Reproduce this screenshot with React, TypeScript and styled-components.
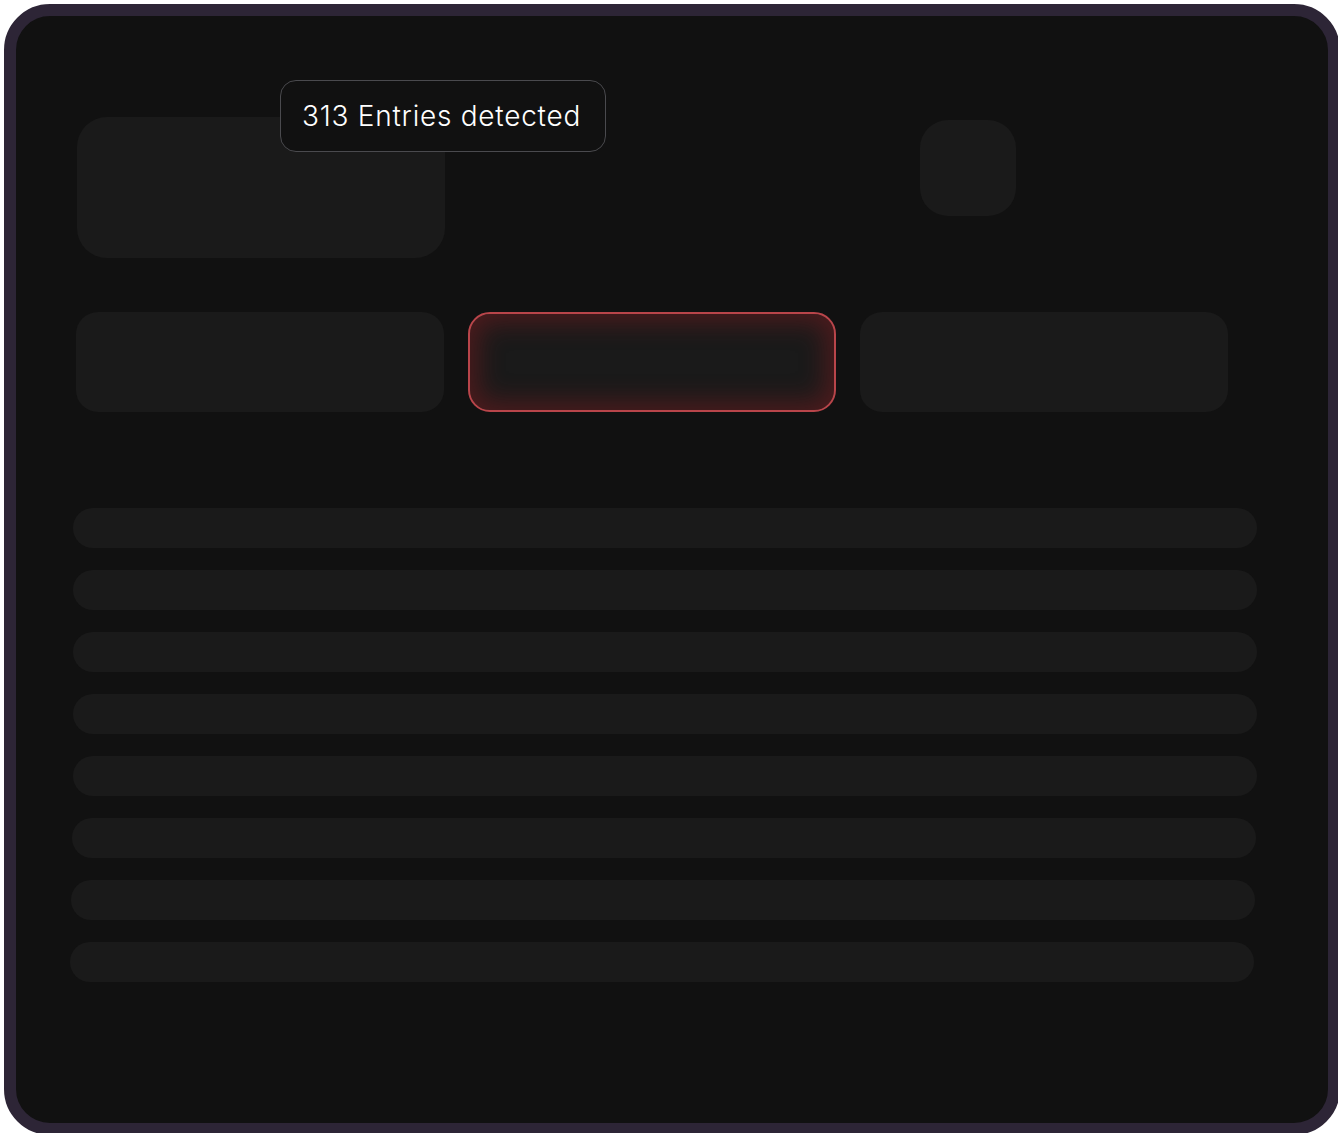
import React from 'react'
import styled, { createGlobalStyle } from 'styled-components'

const GlobalStyle = createGlobalStyle`
  html, body {
    margin: 0;
    padding: 0;
    background: #ffffff;
    font-family: 'Inter', 'Noto Sans', sans-serif;
  }
`

const Frame = styled.div`
  box-sizing: border-box;
  width: 1336px;
  height: 1131px;
  margin: 4px 0 0 4px;
  border: 12px solid #2d2536;
  border-radius: 46px;
  background: #111111;
  overflow: hidden;
  padding: 101px 0 0 60px;
  display: flex;
  flex-direction: column;
`

const TopArea = styled.div`
  position: relative;
  display: flex;
  flex-direction: row;
  align-items: flex-start;
  height: 141px;
`

const Panel = styled.div`
  width: 368px;
  height: 141px;
  margin-left: 1px;
  border-radius: 30px;
  background: #1a1a1a;
`

const Square = styled.div`
  width: 96px;
  height: 96px;
  margin: 3px 0 0 475px;
  border-radius: 28px;
  background: #1a1a1a;
`

const Badge = styled.div`
  position: absolute;
  left: 204px;
  top: -37px;
  box-sizing: border-box;
  width: 326px;
  height: 72px;
  display: flex;
  align-items: center;
  padding-left: 21px;
  border: 1px solid #4a4a4e;
  border-radius: 16px;
  background: #111111;
  color: #ffffff;
  font-size: 28px;
  font-weight: 300;
  letter-spacing: 0.75px;
  white-space: nowrap;
`

const CardRow = styled.div`
  display: flex;
  gap: 24px;
  margin-top: 54px;
`

const Card = styled.div<{ $active?: boolean }>`
  box-sizing: border-box;
  width: 368px;
  height: 100px;
  border-radius: 22px;
  background: #1a1a1a;
  ${p =>
    p.$active &&
    `
    border: 2.5px solid #b9454a;
    box-shadow: inset 0 0 26px 8px rgba(140, 28, 34, 0.45);
  `}
`

const List = styled.div`
  display: flex;
  flex-direction: column;
  gap: 22px;
  margin-top: 96px;
`

const Line = styled.div<{ $shift?: number }>`
  width: 1184px;
  height: 40px;
  margin-left: ${p => -3 - (p.$shift || 0)}px;
  border-radius: 20px;
  background: #1a1a1a;
`

const lineShifts = [0, 0, 0, 0, 0, 1, 2, 3]

export default function App() {
  return (
    <>
      <GlobalStyle />
      <Frame>
        <TopArea>
          <Panel />
          <Square />
          <Badge>313 Entries detected</Badge>
        </TopArea>
        <CardRow>
          <Card />
          <Card $active />
          <Card />
        </CardRow>
        <List>
          {lineShifts.map((s, i) => (
            <Line key={i} $shift={s} />
          ))}
        </List>
      </Frame>
    </>
  )
}
